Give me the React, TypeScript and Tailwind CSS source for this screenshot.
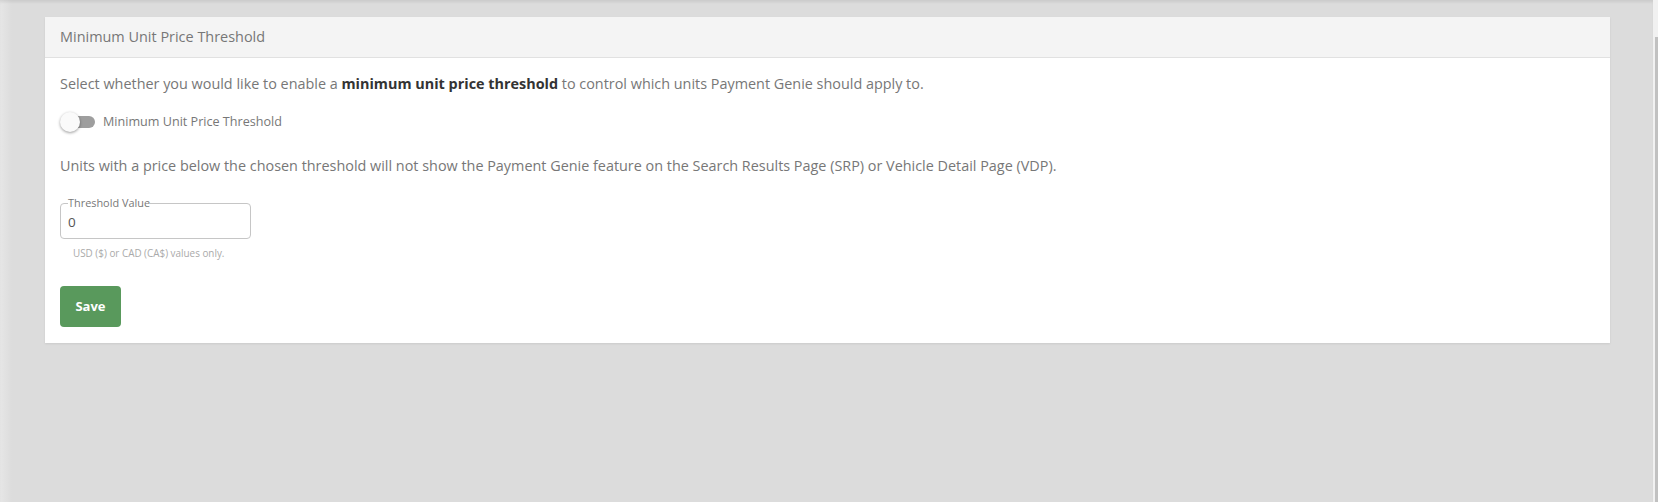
import { useState } from 'react'

export default function App() {
  const [enabled, setEnabled] = useState(false)
  const [threshold, setThreshold] = useState('0')

  return (
    <div className="flex h-screen w-full bg-[#dcdcdc] font-['Open_Sans',sans-serif]">
      <main className="flex-1 bg-[linear-gradient(to_right,#e6e6e6,#dcdcdc_12px)] shadow-[inset_0_3px_3px_-1px_rgba(0,0,0,0.08)] pt-[17px]">
        <section className="ml-[45px] w-[1565px] bg-white shadow-[0_1px_2px_rgba(0,0,0,0.08)]">
          <header className="h-[41px] bg-[#f4f4f4] border-b border-[#e1e1e1] pl-[15px] flex items-center">
            <h2 className="text-[14.45px] text-[#777]">Minimum Unit Price Threshold</h2>
          </header>

          <div className="px-[15px] pt-[16px] pb-[16px]">
            <p className="text-[14.4px] leading-[20px] text-[#777]">
              Select whether you would like to enable a{' '}
              <strong className="font-bold text-[#333]">minimum unit price threshold</strong> to control which units
              Payment Genie should apply to.
            </p>

            {/* toggle */}
            <label className="mt-[18px] flex items-center h-[20px] cursor-pointer select-none">
              <button
                type="button"
                onClick={() => setEnabled(!enabled)}
                className="relative w-[35px] h-[20px] shrink-0"
              >
                <span
                  className={
                    enabled
                      ? 'absolute left-[1px] right-0 top-[4px] h-[12px] rounded-full bg-[#8fc593]'
                      : 'absolute left-[1px] right-0 top-[4px] h-[12px] rounded-full bg-[#9e9e9e]'
                  }
                />
                <span
                  className={
                    enabled
                      ? 'absolute top-0 left-[15px] w-[20px] h-[20px] rounded-full bg-[#59995c] shadow-[0_1px_3px_rgba(0,0,0,0.4)]'
                      : 'absolute top-0 left-0 w-[20px] h-[20px] rounded-full bg-[#fafafa] shadow-[0_1px_3px_rgba(0,0,0,0.4)]'
                  }
                />
              </button>
              <span className="ml-[8px] text-[12.6px] text-[#777]">Minimum Unit Price Threshold</span>
            </label>

            <p className="mt-[24px] text-[14.4px] leading-[20px] text-[#777]">
              Units with a price below the chosen threshold will not show the Payment Genie feature on the Search Results
              Page (SRP) or Vehicle Detail Page (VDP).
            </p>

            {/* threshold input */}
            <div className="relative mt-[27px] w-[191px] h-[36px] rounded-[4px] border border-[#c6c6c6]">
              <span className="absolute -top-[8px] left-[7px] bg-white text-[10.9px] leading-[14px] text-[#777]">
                Threshold Value
              </span>
              <input
                value={threshold}
                onChange={(e) => setThreshold(e.target.value)}
                className="w-full h-full pl-[7px] pt-[2px] text-[13.5px] text-[#555] bg-transparent outline-none"
              />
            </div>
            <p className="mt-[7px] ml-[13px] text-[9.9px] leading-[14px] text-[#aaa]">
              USD ($) or CAD (CA$) values only.
            </p>

            <button
              type="button"
              className="mt-[26px] w-[61px] h-[41px] rounded-[4px] bg-[#59995c] text-white text-[13px] font-bold"
            >
              Save
            </button>
          </div>
        </section>
      </main>

      {/* scrollbar */}
      <div className="w-[5px] bg-[#f1f1f1] flex flex-col">
        <div className="h-[37px]" />
        <div className="flex-1 ml-[2px] bg-[#c1c1c1]" />
      </div>
    </div>
  )
}
